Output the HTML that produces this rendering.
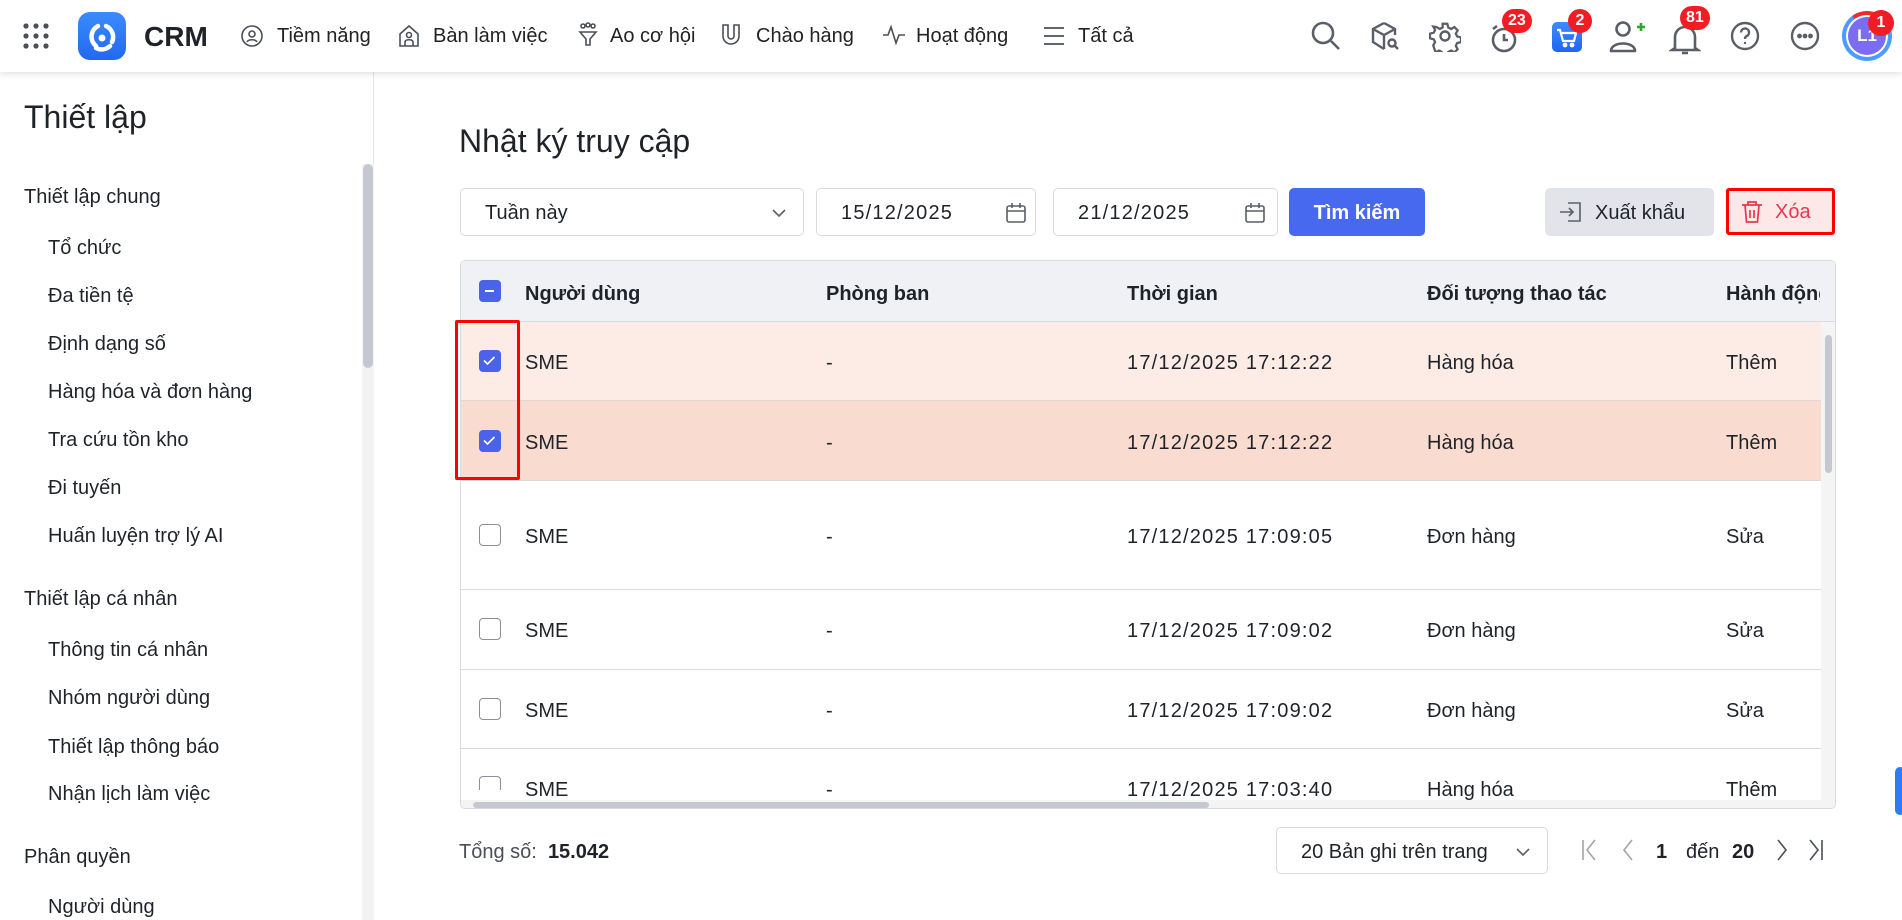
<!DOCTYPE html>
<html><head><meta charset="utf-8">
<style>
*{box-sizing:border-box;margin:0;padding:0}
body{width:1902px;height:920px;overflow:hidden;background:#fff;font-family:"Liberation Sans","Noto Sans CJK SC",sans-serif;color:#1f2329;position:relative}
.a{position:absolute}
.hdr{left:0;top:0;width:1902px;height:72px;background:#fff;box-shadow:0 2px 6px rgba(0,0,0,.12);z-index:5}
.nav{font-size:20px;color:#222;top:25px}
.ic{position:absolute}
.badge{position:absolute;background:#f21c24;color:#fff;font-weight:bold;font-size:16px;height:24px;line-height:24px;border-radius:12px;text-align:center;padding:0 6px}
.side{left:0;top:72px;width:374px;height:848px;border-right:1px solid #e5e6ea}
.sec{left:24px;font-size:20px;color:#1f2329;margin-top:2px}
.it{left:48px;font-size:20px;color:#1f2329;margin-top:2px}
.box{border:1px solid #d9dbe0;border-radius:5px;background:#fff}
.th{font-weight:bold;font-size:20px;color:#1f2329;top:283px}
.cell{font-size:20px;color:#1f2329;margin-top:2px}
.num{letter-spacing:1.2px}
.cb{width:22px;height:22px;border-radius:4px;border:1.5px solid #8a8f99;background:#fff;left:479px}
.cbk{background:#4a63ea;border-color:#4a63ea}
</style></head><body>

<div class="a hdr">
  <svg class="ic" style="left:22px;top:22px" width="28" height="28" viewBox="0 0 28 28" fill="#4b4f57">
    <circle cx="4" cy="4" r="2.6"/><circle cx="14" cy="4" r="2.6"/><circle cx="24" cy="4" r="2.6"/>
    <circle cx="4" cy="14" r="2.6"/><circle cx="14" cy="14" r="2.6"/><circle cx="24" cy="14" r="2.6"/>
    <circle cx="4" cy="24" r="2.6"/><circle cx="14" cy="24" r="2.6"/><circle cx="24" cy="24" r="2.6"/>
  </svg>
  <div class="a" style="left:78px;top:12px;width:48px;height:48px;border-radius:12px;background:linear-gradient(180deg,#3b8cff,#2268f0)">
    <svg width="48" height="48" viewBox="0 0 48 48" fill="none" stroke="#fff" stroke-width="4.5" stroke-linecap="round"><path d="M20 14 A12 12 0 0 0 18 34"/><path d="M28 14 A12 12 0 0 1 34 30"/><path d="M18 36 A12 12 0 0 0 32 34"/><circle cx="24" cy="26" r="3.5" fill="#fff" stroke="none"/></svg>
  </div>
  <div class="a" style="left:144px;top:21px;font-size:28px;font-weight:bold;color:#1f2329">CRM</div>

  <svg class="ic" style="left:240px;top:24px" width="24" height="24" viewBox="0 0 24 24" fill="none" stroke="#4b4f57" stroke-width="1.6"><circle cx="12" cy="12" r="10"/><circle cx="12" cy="10" r="3"/><path d="M7 18c1.5-3 8.5-3 10 0"/></svg>
  <div class="a nav" style="left:277px">Tiềm năng</div>
  <svg class="ic" style="left:397px;top:23px" width="24" height="26" viewBox="0 0 24 26" fill="none" stroke="#4b4f57" stroke-width="1.6"><path d="M3 11 12 3l9 8v12H3z"/><circle cx="12" cy="12" r="2.5"/><path d="M8 23v-4c0-3 8-3 8 0v4"/></svg>
  <div class="a nav" style="left:433px">Bàn làm việc</div>
  <svg class="ic" style="left:577px;top:22px" width="22" height="26" viewBox="0 0 22 26" fill="none" stroke="#4b4f57" stroke-width="1.6"><circle cx="6" cy="4" r="2"/><circle cx="11" cy="3" r="2"/><circle cx="16" cy="4" r="2"/><path d="M3 10h16l-6 7v6h-4v-6z"/></svg>
  <div class="a nav" style="left:610px">Ao cơ hội</div>
  <svg class="ic" style="left:720px;top:22px" width="22" height="26" viewBox="0 0 22 26" fill="none" stroke="#4b4f57" stroke-width="1.6"><path d="M3 3v11a8 8 0 0 0 16 0V3h-5v11a3 3 0 0 1-6 0V3z"/></svg>
  <div class="a nav" style="left:756px">Chào hàng</div>
  <svg class="ic" style="left:882px;top:24px" width="24" height="22" viewBox="0 0 24 22" fill="none" stroke="#4b4f57" stroke-width="1.6"><path d="M1 11h5l3-8 5 16 3-8h6"/></svg>
  <div class="a nav" style="left:916px">Hoạt động</div>
  <svg class="ic" style="left:1043px;top:26px" width="22" height="20" viewBox="0 0 22 20" stroke="#4b4f57" stroke-width="1.8"><path d="M1 2h20M1 10h20M1 18h20"/></svg>
  <div class="a nav" style="left:1078px">Tất cả</div>

  <svg class="ic" style="left:1310px;top:20px" width="32" height="32" viewBox="0 0 32 32" fill="none" stroke="#5a5e66" stroke-width="2.6"><circle cx="13" cy="13" r="10"/><path d="M21 21l8 8"/></svg>
  <svg class="ic" style="left:1369px;top:20px" width="32" height="32" viewBox="0 0 32 32" fill="none" stroke="#5a5e66" stroke-width="2.4"><path d="M15 3 4 9v13l11 7M15 3l11 6v6M4 9l11 6 11-6M15 15v14"/><circle cx="23" cy="23" r="3.5"/><path d="M25.5 25.5 29 29"/></svg>
  <svg class="ic" style="left:1429px;top:20px" width="32" height="32" viewBox="0 0 32 32" fill="none" stroke="#5a5e66" stroke-width="2.4"><circle cx="16" cy="16" r="4.5"/><path d="M13.5 3h5l1 4 3 1.5 3.5-2 3.5 3.5-2 3.5 1.5 3 4 1v5l-4 1-1.5 3 2 3.5-3.5 3.5-3.5-2-3 1.5-1 4h-5l-1-4-3-1.5-3.5 2L3.5 26l2-3.5-1.5-3-4-1v-5l4-1 1.5-3-2-3.5L7 6.5l3.5 2 3-1.5z" transform="scale(.94) translate(1 1)"/></svg>
  <svg class="ic" style="left:1488px;top:22px" width="32" height="32" viewBox="0 0 32 32" fill="none" stroke="#5a5e66" stroke-width="2.6"><circle cx="16" cy="18" r="11"/><path d="M16 12v6h4M5 7l4-3"/></svg>
  <div class="badge" style="left:1502px;top:9px">23</div>
  <div class="a" style="left:1552px;top:22px;width:30px;height:30px;border-radius:5px;background:linear-gradient(180deg,#3d8bff,#1f66f0)"><svg width="30" height="30" viewBox="0 0 30 30" fill="none" stroke="#fff" stroke-width="2.2"><path d="M5 8h3l3 11h11l2-8H10"/><circle cx="13" cy="23" r="1.3" fill="#fff"/><circle cx="20" cy="23" r="1.3" fill="#fff"/></svg></div>
  <div class="badge" style="left:1568px;top:9px;width:24px;padding:0">2</div>
  <svg class="ic" style="left:1607px;top:18px" width="40" height="36" viewBox="0 0 40 36" fill="none" stroke="#5a5e66" stroke-width="2.6"><circle cx="16" cy="11" r="6.5"/><path d="M4 33c0-10 24-10 24 0z" stroke-linejoin="round"/><path d="M30 9h8M34 5v8" stroke="#2aa82a"/></svg>
  <svg class="ic" style="left:1669px;top:22px" width="32" height="34" viewBox="0 0 32 34" fill="none" stroke="#5a5e66" stroke-width="2.6"><path d="M6 26V15a10 10 0 0 1 20 0v11l3 2H3zM13 31h6"/></svg>
  <div class="badge" style="left:1680px;top:6px">81</div>
  <svg class="ic" style="left:1730px;top:21px" width="30" height="30" viewBox="0 0 30 30" fill="none" stroke="#5a5e66" stroke-width="2.4"><circle cx="15" cy="15" r="13"/><path d="M11 11.5a4 4 0 1 1 5.5 3.7c-1.2.6-1.5 1.3-1.5 2.8"/><circle cx="15" cy="22" r="1.2" fill="#5a5e66" stroke="none"/></svg>
  <svg class="ic" style="left:1790px;top:21px" width="30" height="30" viewBox="0 0 30 30" fill="none" stroke="#5a5e66" stroke-width="2.4"><circle cx="15" cy="15" r="13"/><circle cx="9.5" cy="15" r="1.2" fill="#5a5e66"/><circle cx="15" cy="15" r="1.2" fill="#5a5e66"/><circle cx="20.5" cy="15" r="1.2" fill="#5a5e66"/></svg>
  <div class="a" style="left:1842px;top:11px;width:50px;height:50px;border-radius:50%;background:conic-gradient(#ee2a2a 0 20%,#4a9dff 20% 90%,#ee2a2a 90%)"></div>
  <div class="a" style="left:1846px;top:15px;width:42px;height:42px;border-radius:50%;background:#fff"></div>
  <div class="a" style="left:1848px;top:17px;width:38px;height:38px;border-radius:50%;background:#7b6cf0;color:#fff;font-weight:bold;font-size:17px;text-align:center;line-height:38px">L1</div>
  <div class="badge" style="left:1868px;top:10px;width:26px;padding:0;border-radius:13px;height:26px;line-height:26px">1</div>
</div>

<div class="a side">
  <div class="a" style="left:24px;top:27px;font-size:32px;color:#1f2329">Thiết lập</div>
  <div class="a" style="left:362px;top:92px;width:12px;height:756px;background:#f3f3f4"></div>
  <div class="a" style="left:363px;top:92px;width:10px;height:204px;border-radius:5px;background:#c5c8d1"></div>
  <div class="a sec" style="top:112px">Thiết lập chung</div>
  <div class="a it" style="top:163px">Tổ chức</div>
  <div class="a it" style="top:211px">Đa tiền tệ</div>
  <div class="a it" style="top:259px">Định dạng số</div>
  <div class="a it" style="top:307px">Hàng hóa và đơn hàng</div>
  <div class="a it" style="top:355px">Tra cứu tồn kho</div>
  <div class="a it" style="top:403px">Đi tuyến</div>
  <div class="a it" style="top:451px">Huấn luyện trợ lý AI</div>
  <div class="a sec" style="top:514px">Thiết lập cá nhân</div>
  <div class="a it" style="top:565px">Thông tin cá nhân</div>
  <div class="a it" style="top:613px">Nhóm người dùng</div>
  <div class="a it" style="top:662px">Thiết lập thông báo</div>
  <div class="a it" style="top:709px">Nhận lịch làm việc</div>
  <div class="a sec" style="top:772px">Phân quyền</div>
  <div class="a it" style="top:822px">Người dùng</div>
</div>

<div class="a" style="left:459px;top:123px;font-size:32px;color:#1f2329">Nhật ký truy cập</div>

<div class="a box" style="left:460px;top:188px;width:344px;height:48px"><span class="a" style="left:24px;top:13px;font-size:20px">Tuần này</span>
<svg class="a" style="right:16px;top:18px" width="16" height="12" viewBox="0 0 16 12" fill="none" stroke="#5a5e66" stroke-width="1.6"><path d="M2 3l6 6 6-6"/></svg></div>
<div class="a box" style="left:816px;top:188px;width:220px;height:48px"><span class="a num" style="left:24px;top:13px;font-size:20px">15/12/2025</span>
<svg class="a" style="left:188px;top:13px" width="22" height="22" viewBox="0 0 22 22" fill="none" stroke="#5a5e66" stroke-width="1.6"><rect x="2" y="4" width="18" height="16" rx="2"/><path d="M2 9h18M7 1v5M15 1v5"/></svg></div>
<div class="a box" style="left:1053px;top:188px;width:225px;height:48px"><span class="a num" style="left:24px;top:13px;font-size:20px">21/12/2025</span>
<svg class="a" style="left:190px;top:13px" width="22" height="22" viewBox="0 0 22 22" fill="none" stroke="#5a5e66" stroke-width="1.6"><rect x="2" y="4" width="18" height="16" rx="2"/><path d="M2 9h18M7 1v5M15 1v5"/></svg></div>
<div class="a" style="left:1289px;top:188px;width:136px;height:48px;border-radius:5px;background:#4669f0;color:#fff;font-size:20px;font-weight:bold;text-align:center;line-height:50px">Tìm kiếm</div>
<div class="a" style="left:1545px;top:188px;width:169px;height:48px;border-radius:5px;background:#e3e4ea;font-size:20px;line-height:50px"><svg class="a" style="left:14px;top:13px" width="24" height="22" viewBox="0 0 24 22" fill="none" stroke="#5a5e66" stroke-width="1.6"><path d="M9 2h12v18H9M1 11h13M10 7l4 4-4 4"/></svg><span class="a" style="left:50px">Xuất khẩu</span></div>
<div class="a" style="left:1726px;top:188px;width:109px;height:47px;background:#fde8e8;border:3px solid #f00;border-radius:3px;color:#e8384f;font-size:20px;line-height:43px"><svg class="a" style="left:12px;top:9px" width="22" height="24" viewBox="0 0 22 24" fill="none" stroke="#e8384f" stroke-width="1.7"><path d="M1 5h20M7 5V2h8v3M4 5l1.5 17h11L18 5M9 10v8M13 10v8"/></svg><span class="a" style="left:46px">Xóa</span></div>

<div class="a" style="left:460px;top:260px;width:1376px;height:549px;border:1px solid #d9dbe0;border-radius:5px;overflow:hidden">
  <div class="a" style="left:0;top:0;width:1376px;height:61px;background:#f0f1f4;border-bottom:1px solid #d9dbe0"></div>
  <div class="a" style="left:0;top:61px;width:1376px;height:79px;background:#fcece5;border-bottom:1px solid #e2d8d3"></div>
  <div class="a" style="left:0;top:140px;width:1376px;height:80px;background:#f9dccf;border-bottom:1px solid #d9dbe0"></div>
  <div class="a" style="left:0;top:328px;width:1376px;height:1px;background:#d9dbe0"></div>
  <div class="a" style="left:0;top:408px;width:1376px;height:1px;background:#d9dbe0"></div>
  <div class="a" style="left:0;top:487px;width:1376px;height:1px;background:#d9dbe0"></div>
  <div class="a" style="left:1360px;top:61px;width:16px;height:488px;background:#f4f4f5"></div>
  <div class="a" style="left:1364px;top:74px;width:7px;height:138px;border-radius:4px;background:#c5c8d1"></div>
  <div class="a" style="left:0;top:539px;width:1360px;height:10px;background:#f4f4f5"></div>
  <div class="a" style="left:12px;top:541px;width:736px;height:6px;border-radius:3px;background:#c5c8d1"></div>
</div>

<div class="a cb cbk" style="top:280px"><div class="a" style="left:5px;top:9px;width:9px;height:2px;background:#fff"></div></div>
<div class="a th" style="left:525px">Người dùng</div>
<div class="a th" style="left:826px">Phòng ban</div>
<div class="a th" style="left:1127px">Thời gian</div>
<div class="a th" style="left:1427px">Đối tượng thao tác</div>
<div class="a th" style="left:1726px;width:94px;overflow:hidden;white-space:nowrap">Hành động</div>

<div class="a cb cbk" style="top:350px"><svg width="19" height="19" viewBox="0 0 19 19" fill="none" stroke="#fff" stroke-width="1.6"><path d="M4 9.5l3.5 3.5 7-7"/></svg></div>
<div class="a cb cbk" style="top:430px"><svg width="19" height="19" viewBox="0 0 19 19" fill="none" stroke="#fff" stroke-width="1.6"><path d="M4 9.5l3.5 3.5 7-7"/></svg></div>
<div class="a cb" style="top:524px"></div>
<div class="a cb" style="top:618px"></div>
<div class="a cb" style="top:698px"></div>
<div class="a" style="left:479px;top:776px;width:22px;border:1.5px solid #8a8f99;border-bottom:none;border-radius:4px 4px 0 0;height:14px"></div>

<div class="a" style="left:455px;top:320px;width:65px;height:160px;border:3px solid #f00;border-radius:2px"></div>

<div class="a cell" style="left:525px;top:350px">SME</div><div class="a cell" style="left:826px;top:350px">-</div><div class="a cell num" style="left:1127px;top:350px">17/12/2025 17:12:22</div><div class="a cell" style="left:1427px;top:350px">Hàng hóa</div><div class="a cell" style="left:1726px;top:350px">Thêm</div>
<div class="a cell" style="left:525px;top:430px">SME</div><div class="a cell" style="left:826px;top:430px">-</div><div class="a cell num" style="left:1127px;top:430px">17/12/2025 17:12:22</div><div class="a cell" style="left:1427px;top:430px">Hàng hóa</div><div class="a cell" style="left:1726px;top:430px">Thêm</div>
<div class="a cell" style="left:525px;top:524px">SME</div><div class="a cell" style="left:826px;top:524px">-</div><div class="a cell num" style="left:1127px;top:524px">17/12/2025 17:09:05</div><div class="a cell" style="left:1427px;top:524px">Đơn hàng</div><div class="a cell" style="left:1726px;top:524px">Sửa</div>
<div class="a cell" style="left:525px;top:618px">SME</div><div class="a cell" style="left:826px;top:618px">-</div><div class="a cell num" style="left:1127px;top:618px">17/12/2025 17:09:02</div><div class="a cell" style="left:1427px;top:618px">Đơn hàng</div><div class="a cell" style="left:1726px;top:618px">Sửa</div>
<div class="a cell" style="left:525px;top:698px">SME</div><div class="a cell" style="left:826px;top:698px">-</div><div class="a cell num" style="left:1127px;top:698px">17/12/2025 17:09:02</div><div class="a cell" style="left:1427px;top:698px">Đơn hàng</div><div class="a cell" style="left:1726px;top:698px">Sửa</div>
<div class="a cell" style="left:525px;top:777px">SME</div><div class="a cell" style="left:826px;top:777px">-</div><div class="a cell num" style="left:1127px;top:777px">17/12/2025 17:03:40</div><div class="a cell" style="left:1427px;top:777px">Hàng hóa</div><div class="a cell" style="left:1726px;top:777px">Thêm</div>

<div class="a" style="left:459px;top:841px;font-size:20px;color:#4b4f57">Tổng số:&nbsp; <b style="color:#1f2329">15.042</b></div>
<div class="a box" style="left:1276px;top:827px;width:272px;height:47px"><span class="a" style="left:24px;top:13px;font-size:20px">20 Bản ghi trên trang</span>
<svg class="a" style="right:16px;top:18px" width="16" height="12" viewBox="0 0 16 12" fill="none" stroke="#5a5e66" stroke-width="1.6"><path d="M2 3l6 6 6-6"/></svg></div>
<svg class="a" style="left:1580px;top:838px" width="20" height="24" viewBox="0 0 20 24" fill="none" stroke="#a0a4ab" stroke-width="1.6"><path d="M3 2v20M15 2 7 12l8 10"/></svg>
<svg class="a" style="left:1620px;top:838px" width="16" height="24" viewBox="0 0 16 24" fill="none" stroke="#a0a4ab" stroke-width="1.6"><path d="M12 2 4 12l8 10"/></svg>
<div class="a" style="left:1656px;top:841px;font-size:20px;font-weight:bold">1</div>
<div class="a" style="left:1686px;top:841px;font-size:20px">đến</div>
<div class="a" style="left:1732px;top:841px;font-size:20px;font-weight:bold">20</div>
<svg class="a" style="left:1774px;top:838px" width="16" height="24" viewBox="0 0 16 24" fill="none" stroke="#4b4f57" stroke-width="1.6"><path d="M4 2l8 10-8 10"/></svg>
<svg class="a" style="left:1806px;top:838px" width="20" height="24" viewBox="0 0 20 24" fill="none" stroke="#4b4f57" stroke-width="1.6"><path d="M4 2l8 10-8 10M16 2v20"/></svg>

<div class="a" style="left:1895px;top:767px;width:10px;height:48px;border-radius:5px;background:#2b7cf6"></div>
</body></html>
